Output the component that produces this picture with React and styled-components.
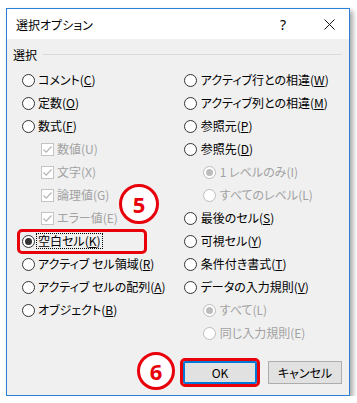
import React from "react";
import styled, { createGlobalStyle } from "styled-components";

const GlobalStyle = createGlobalStyle`
  html, body {
    margin: 0;
    padding: 0;
    background: #fff;
  }
  body {
    font-family: "Noto Sans CJK JP", "Noto Sans", sans-serif;
    font-feature-settings: "palt";
    font-size: 12px;
    color: #000;
  }
`;

const Page = styled.div`
  padding: 8px 0 0 6px;
`;

const Dialog = styled.div`
  position: relative;
  width: 344px;
  height: 388px;
  box-sizing: border-box;
  border: 1px solid #2b7fd4;
  background: #f0f0f0;
  box-shadow: 3px 3px 5px rgba(0, 0, 0, 0.35);
  display: flex;
  flex-direction: column;
`;

const TitleBar = styled.div`
  height: 30px;
  flex: none;
  background: #fff;
  display: flex;
  align-items: center;
  padding: 0 14px 0 9px;
`;

const Title = styled.span`
  flex: 1;
  font-size: 12px;
`;

const Help = styled.span`
  font-family: "Noto Sans", sans-serif;
  font-size: 14px;
  margin-right: 38px;
`;

const Body = styled.div`
  flex: 1;
  padding: 6px 7px 11px 6px;
  display: flex;
  flex-direction: column;
`;

const GroupHeader = styled.div`
  display: flex;
  align-items: center;
  height: 18px;
  gap: 6px;
  &::after {
    content: "";
    flex: 1;
    height: 1px;
    background: #dadada;
  }
`;

const Columns = styled.div`
  display: flex;
  margin-top: 5.5px;
  padding-left: 8.5px;
`;

const Column = styled.div`
  width: ${({ $w }) => $w}px;
  display: flex;
  flex-direction: column;
`;

const Row = styled.div`
  position: relative;
  height: 23px;
  display: flex;
  align-items: center;
  gap: 3.5px;
  padding-left: ${({ $indent }) => ($indent ? 19 : 0)}px;
  color: ${({ $disabled }) => ($disabled ? "#a2a2a2" : "#000")};
  white-space: nowrap;
  ${({ $highlight }) =>
    $highlight &&
    `
    &::after {
      content: "";
      position: absolute;
      left: -4.5px;
      top: -0.5px;
      width: 130px;
      height: 25px;
      box-sizing: border-box;
      border: 3px solid #e8000b;
      border-radius: 5px;
    }
  `}
`;

const Radio = styled.span`
  width: 13px;
  height: 13px;
  box-sizing: border-box;
  flex: none;
  border-radius: 50%;
  border: 1px solid ${({ $disabled }) => ($disabled ? "#bcbcbc" : "#333")};
  background: #fff;
  display: flex;
  align-items: center;
  justify-content: center;
  &::after {
    content: "";
    display: ${({ $checked }) => ($checked ? "block" : "none")};
    width: 7px;
    height: 7px;
    border-radius: 50%;
    background: ${({ $disabled }) => ($disabled ? "#bcbcbc" : "#333")};
  }
`;

const Box = styled.span`
  width: 13px;
  height: 13px;
  box-sizing: border-box;
  flex: none;
  border: 1px solid #c4c4c4;
  background: #fff;
  display: flex;
  align-items: center;
  justify-content: center;
`;

const Label = styled.span`
  line-height: 14px;
  padding: 0 1px;
  border: 1px dotted ${({ $focus }) => ($focus ? "#000" : "transparent")};
  margin-left: -2px;
`;

const Buttons = styled.div`
  margin-top: auto;
  display: flex;
  justify-content: flex-end;
  gap: 11px;
`;

const Button = styled.button`
  width: 74px;
  height: 23px;
  box-sizing: border-box;
  font-family: inherit;
  font-feature-settings: "palt";
  font-size: 12px;
  color: #000;
  background: #e1e1e1;
  border: ${({ $default }) => ($default ? "2px solid #0078d7" : "1px solid #adadad")};
  padding: 0;
  ${({ $marked }) =>
    $marked &&
    `
    outline: 3px solid #e8000b;
    outline-offset: 0;
    border-radius: 2px;
  `}
`;

const Step = styled.div`
  position: absolute;
  left: ${({ $x }) => $x}px;
  top: ${({ $y }) => $y}px;
  width: ${({ $d }) => $d}px;
  height: ${({ $d }) => $d}px;
  box-sizing: border-box;
  border: 3px solid #e8000b;
  border-radius: 50%;
  background: #fff;
  color: #e8000b;
  font-family: "Noto Sans", sans-serif;
  font-weight: 700;
  font-size: 22px;
  display: flex;
  align-items: center;
  justify-content: center;
`;

const Check = () => (
  <svg width="11" height="11" viewBox="0 0 11 11">
    <path d="M1.5 5.5 L4.2 8.2 L9.5 2.5" fill="none" stroke="#b4b4b4" strokeWidth="1.2" />
  </svg>
);

const Close = () => (
  <svg width="11" height="11" viewBox="0 0 11 11">
    <path d="M0.5 0.5 L10.5 10.5 M10.5 0.5 L0.5 10.5" stroke="#111" strokeWidth="1" />
  </svg>
);

const Text = ({ t, k, after = "" }) => (
  <>
    {t}(<u>{k}</u>){after}
  </>
);

const RadioRow = ({ children, checked, disabled, indent, focus, highlight }) => (
  <Row $disabled={disabled} $indent={indent} $highlight={highlight}>
    <Radio $checked={checked} $disabled={disabled} />
    <Label $focus={focus}>{children}</Label>
  </Row>
);

const CheckRow = ({ children }) => (
  <Row $disabled $indent>
    <Box>
      <Check />
    </Box>
    <Label>{children}</Label>
  </Row>
);

export default function App() {
  return (
    <>
      <GlobalStyle />
      <Page>
        <Dialog>
          <TitleBar>
            <Title>選択オプション</Title>
            <Help>?</Help>
            <Close />
          </TitleBar>
          <Body>
            <GroupHeader>選択</GroupHeader>
            <Columns>
              <Column $w={165}>
                <RadioRow><Text t="コメント" k="C" /></RadioRow>
                <RadioRow><Text t="定数" k="O" /></RadioRow>
                <RadioRow><Text t="数式" k="F" /></RadioRow>
                <CheckRow>数値(U)</CheckRow>
                <CheckRow>文字(X)</CheckRow>
                <CheckRow>論理値(G)</CheckRow>
                <CheckRow>エラー値(E)</CheckRow>
                <RadioRow checked focus highlight><Text t="空白セル" k="K" /></RadioRow>
                <RadioRow><Text t="アクティブ セル領域" k="R" /></RadioRow>
                <RadioRow><Text t="アクティブ セルの配列" k="A" /></RadioRow>
                <RadioRow><Text t="オブジェクト" k="B" /></RadioRow>
              </Column>
              <Column $w={160}>
                <RadioRow><Text t="アクティブ行との相違" k="W" /></RadioRow>
                <RadioRow><Text t="アクティブ列との相違" k="M" /></RadioRow>
                <RadioRow><Text t="参照元" k="P" /></RadioRow>
                <RadioRow><Text t="参照先" k="D" /></RadioRow>
                <RadioRow indent disabled checked>1 レベルのみ(I)</RadioRow>
                <RadioRow indent disabled>すべてのレベル(L)</RadioRow>
                <RadioRow><Text t="最後のセル" k="S" /></RadioRow>
                <RadioRow><Text t="可視セル" k="Y" /></RadioRow>
                <RadioRow><Text t="条件付き書式" k="T" /></RadioRow>
                <RadioRow><Text t="データの入力規則" k="V" /></RadioRow>
                <RadioRow indent disabled checked>すべて(L)</RadioRow>
                <RadioRow indent disabled>同じ入力規則(E)</RadioRow>
              </Column>
            </Columns>
            <Buttons>
              <Button $default $marked>OK</Button>
              <Button>キャンセル</Button>
            </Buttons>
          </Body>
          <Step $x={112} $y={175} $d={40}>5</Step>
          <Step $x={130} $y={343} $d={38}>6</Step>
        </Dialog>
      </Page>
    </>
  );
}
